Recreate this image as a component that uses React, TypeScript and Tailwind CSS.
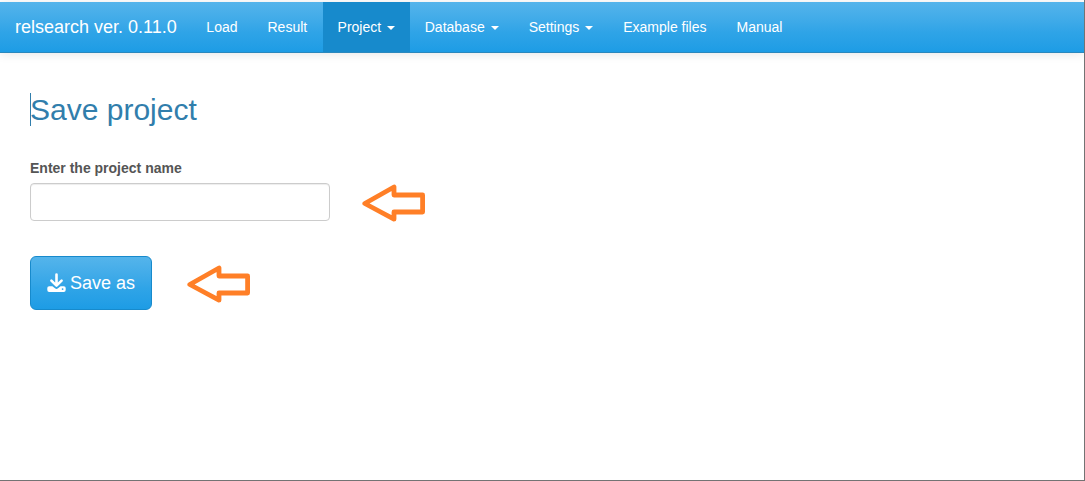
import React from "react";

type NavItem = { label: string; menu?: boolean; active?: boolean };

const items: NavItem[] = [
  { label: "Load" },
  { label: "Result" },
  { label: "Project", menu: true, active: true },
  { label: "Database", menu: true },
  { label: "Settings", menu: true },
  { label: "Example files" },
  { label: "Manual" },
];

function Arrow() {
  return (
    <svg width="64" height="38" viewBox="0 0 64 38" className="mt-px shrink-0" aria-hidden="true">
      <path
        d="M2.8 19.5 32 3v8h28.6v17H32v7.2Z"
        fill="none"
        stroke="#ff7f27"
        strokeWidth="4.8"
        strokeLinejoin="round"
      />
    </svg>
  );
}

function DownloadIcon() {
  return (
    <svg width="20" height="20" viewBox="0 0 20 20" className="-mr-px -mt-px shrink-0" aria-hidden="true">
      <path
        d="M9.5 1.6V12M4.4 7.6l5.1 5 5.1-5"
        fill="none"
        stroke="white"
        strokeWidth="2.6"
        strokeLinecap="round"
        strokeLinejoin="round"
      />
      <path
        fillRule="evenodd"
        fill="white"
        d="M2.2 13.2h3.2l2.6 2.1a2.4 2.4 0 0 0 3 0l2.6-2.1h3.2a1.9 1.9 0 0 1 1.9 1.9v1.9a1.9 1.9 0 0 1-1.9 1.9H2.2a1.9 1.9 0 0 1-1.9-1.9v-1.9a1.9 1.9 0 0 1 1.9-1.9Zm13.4 2a.9.9 0 1 0 0 1.8.9.9 0 0 0 0-1.8Z"
      />
    </svg>
  );
}

export default function App() {
  return (
    <div className="flex h-[481px] w-[1085px] flex-col overflow-hidden border-r border-b border-[#737373] bg-white pt-0.5 font-['Liberation_Sans',Arial,sans-serif] text-sm text-[#555]">
      <nav className="flex h-[51px] shrink-0 border-b border-[#2b88bd] bg-linear-to-b from-[#54b4eb] from-0% via-[#2fa4e7] via-60% to-[#1d9ce5] to-100% text-white shadow-[0_1px_10px_rgba(0,0,0,0.1)]">
        <a className="px-[15px] pt-[15px] text-[18px] leading-5">relsearch ver. 0.11.0</a>
        <div className="flex">
          {items.map((item) => (
            <a
              key={item.label}
              className={
                item.active
                  ? "flex items-center bg-[#178acc] px-[15px] leading-5"
                  : "flex items-center pr-[15.4px] pl-[14.6px] leading-5"
              }
            >
              {item.label}
              {item.menu && (
                <span className="ml-1.5 mt-0.5 border-x-4 border-t-4 border-x-transparent border-t-white" />
              )}
            </a>
          ))}
        </div>
      </nav>
      <main className="flex flex-col items-start px-[30px] pt-10">
        <h2 className="flex h-[33px] items-center border-l border-[#317eac] text-[30px] leading-[33px] text-[#317eac]">
          <span className="-ml-px">Save project</span>
        </h2>
        <label htmlFor="name" className="mt-8 font-bold leading-5">
          Enter the project name
        </label>
        <div className="mt-[5px] flex h-[38px] items-center gap-8">
          <input
            id="name"
            className="h-[38px] w-[300px] rounded border border-[#ccc] bg-white px-3 shadow-[inset_0_1px_1px_rgba(0,0,0,0.075)] outline-none"
          />
          <Arrow />
        </div>
        <div className="mt-[35px] flex items-center gap-[35px]">
          <button className="flex h-[54px] w-[122px] items-center gap-1 rounded-md border border-[#178acc] bg-linear-to-b from-[#54b4eb] from-0% via-[#2fa4e7] via-60% to-[#1d9ce5] to-100% pl-4 text-[18px] leading-6 text-white">
            <DownloadIcon />
            Save as
          </button>
          <Arrow />
        </div>
      </main>
    </div>
  );
}
